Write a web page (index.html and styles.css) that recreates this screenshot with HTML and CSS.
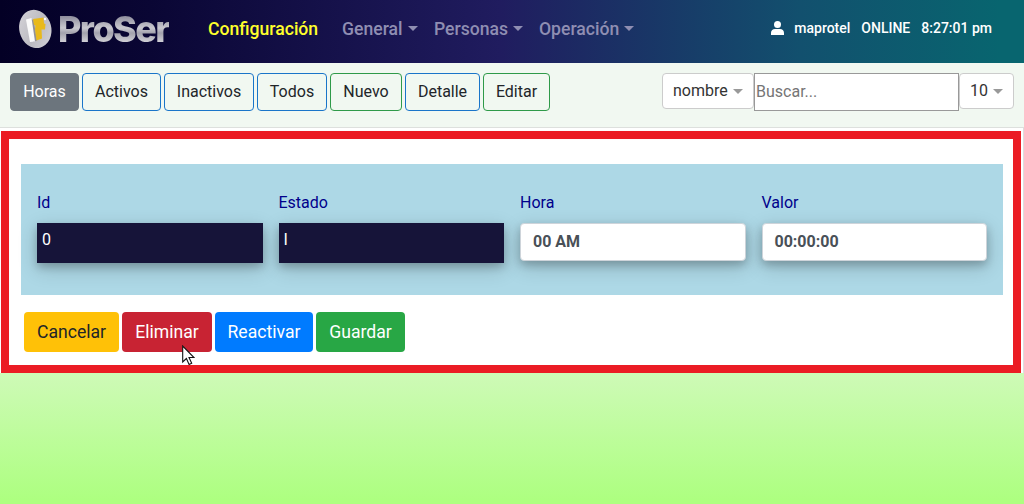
FILE: index.html
```
<!DOCTYPE html>
<html lang="es">
<head>
<meta charset="utf-8">
<title>ProSer - Horas</title>
<link rel="stylesheet" href="styles.css">
</head>
<body>
<header class="navbar">
  <a class="brand">
    <svg class="brand-mark" width="34" height="40" viewBox="0 0 34 40">
      <defs><linearGradient id="silver" x1="0" y1="0" x2="1" y2="1"><stop offset="0" stop-color="#d6d5da"/><stop offset=".55" stop-color="#bcbbc1"/><stop offset="1" stop-color="#d6d5da"/></linearGradient></defs>
      <ellipse cx="17.300" cy="20" rx="16" ry="19.300" transform="rotate(-14 17 20)" fill="url(#silver)"/>
      <path d="M13 10l2.500 1 3.500 20.500-4 1.500z" fill="#909098"/>
      <path d="M8 10.500l5.500-1.500 3.500 23.500-5 .5z" fill="#fafafa"/>
      <path d="M15 10l10.500-1.500.5 6 1.500.5-.5 5.500h-3.500l.5 9-5.500 2-1.500-11 .5-4-1.500-.5z" fill="#e8b91b"/>
      <circle cx="27" cy="10" r="1.200" fill="#fff"/>
    </svg>
    <span class="brand-name">ProSer</span>
  </a>
  <nav class="menu">
    <a class="menu-link active">Configuración</a>
    <a class="menu-link general">General<i class="caret"></i></a>
    <a class="menu-link personas">Personas<i class="caret"></i></a>
    <a class="menu-link">Operación<i class="caret"></i></a>
  </nav>
  <div class="session">
    <svg class="user" width="13" height="14" viewBox="0 0 13 14" fill="#fff"><circle cx="6.500" cy="3.500" r="3.500"/><path d="M0 14v-2.200C0 9.500 1.800 8 4 8h5c2.200 0 4 1.500 4 3.800V14z"/></svg>
    <span class="user-name">maprotel</span><span class="status">ONLINE</span><span>8:27:01 pm</span>
  </div>
</header>
<div class="toolbar">
  <div class="filters">
    <button class="btn current horas">Horas</button>
    <button class="btn activos">Activos</button>
    <button class="btn inactivos">Inactivos</button>
    <button class="btn todos">Todos</button>
    <button class="btn green nuevo">Nuevo</button>
    <button class="btn detalle">Detalle</button>
    <button class="btn green editar">Editar</button>
  </div>
  <div class="search">
    <div class="select field">nombre<i class="caret"></i></div>
    <input class="query" placeholder="Buscar...">
    <div class="select count">10<i class="caret"></i></div>
  </div>
</div>
<main class="card">
  <section class="frame">
    <div class="panel">
      <div class="group"><label class="label">Id</label><div class="readonly">0</div></div>
      <div class="group"><label class="label">Estado</label><div class="readonly">I</div></div>
      <div class="group"><label class="label">Hora</label><div class="control">00 AM</div></div>
      <div class="group"><label class="label">Valor</label><div class="control">00:00:00</div></div>
    </div>
    <div class="actions">
      <button class="action cancel">Cancelar</button>
      <button class="action remove">Eliminar</button>
      <button class="action restore">Reactivar</button>
      <button class="action save">Guardar</button>
    </div>
  </section>
</main>
<svg class="cursor" width="13" height="21" viewBox="0 0 13 21"><path d="M.7 1v16l3.700-3.500 2.700 6 2.600-1.200-2.700-5.800h5z" fill="#fff" stroke="#111" stroke-width="1.100"/></svg>
</body>
</html>
```

FILE: styles.css
```
* { box-sizing: border-box; }
body {
  margin: 0;
  height: 504px;
  overflow: hidden;
  font: 16px/24px Roboto, sans-serif;
  color: #212529;
  background: linear-gradient(#fff 0, #f1f8f1 70px, #cefab7 373px, #adff80 500px);
}
.navbar {
  height: 63px;
  display: flex;
  align-items: center;
  padding: 0 32px 6px 18px;
  background: linear-gradient(90deg, #030025 0, #0a0634 150px, #201c5f 500px, #12506e 800px, #08656f 1000px);
}
.brand { display: flex; align-items: center; width: 190px; }
.brand-mark { flex: none; }
.brand-name {
  margin-left: 6px;
  padding-top: 1px;
  font: 800 36px/44px Inter, sans-serif;
  letter-spacing: -1.6px;
  color: transparent;
  background: linear-gradient(#858494 8px, #c9c8cf 22px, #a3a2ad 27px, #d0cfd5 36px);
  background-clip: text;
  -webkit-background-clip: text;
}
.menu { display: flex; font-size: 17.6px; font-weight: 500; color: #8f8eb2; }
.menu-link { white-space: nowrap; width: 106px; }
.menu-link.active { width: 134px; color: #ffff2b; }
.menu-link.general { width: 92px; }
.menu-link.personas { width: 105px; }
.caret {
  display: inline-block;
  margin-left: 5px;
  vertical-align: 4px;
  border: 5px solid transparent;
  border-top-color: currentColor;
  border-bottom: 0;
}
.session { display: flex; align-items: center; margin-left: auto; padding-bottom: 1px; font-size: 14px; font-weight: 500; color: #fff; white-space: nowrap; }
.user { margin-right: 10px; }
.user-name, .status { margin-right: 11px; }
.toolbar {
  height: 65px;
  display: flex;
  justify-content: space-between;
  align-items: flex-start;
  padding: 10px 10px 0;
  background: #f1f8f1;
  border-bottom: 1px solid #dde0dd;
}
.filters { display: flex; gap: 3px; }
.btn {
  height: 38px;
  padding: 0;
  border: 1px solid #1a75c9;
  border-radius: 4px;
  background: transparent;
  font: 16px/24px Roboto, sans-serif;
  color: #212529;
}
.btn.current { background: #6c757d; border-color: #6c757d; color: #fff; }
.btn.green { border-color: #2f9a49; }
.horas { width: 69px; }
.activos { width: 79px; }
.inactivos { width: 90px; }
.todos { width: 70px; }
.nuevo { width: 72px; }
.detalle { width: 75px; }
.editar { width: 67px; }
.search { display: flex; align-items: flex-start; }
.select {
  height: 36px;
  padding: 5px 10px;
  border: 1px solid #ccc;
  border-radius: 4px;
  background: #fff;
  color: #333;
  white-space: nowrap;
}
.select .caret { color: #999; vertical-align: 2px; }
.field { width: 92px; }
.count { width: 55px; }
.query {
  width: 205px;
  height: 38px;
  padding: 0 1px 2px;
  border: 1px solid #999;
  background: #fff;
  font: 16px/24px Roboto, sans-serif;
}
.query::placeholder { color: #757575; }
.card { height: 245px; padding: 3px 2px 0 1px; background: #fff; border-right: 1px solid #ddd; }
.frame { height: 242px; border: 8px solid #eb1c24; padding: 25px 10px 0 12px; width: 1020px; }
.panel {
  height: 131px;
  display: grid;
  grid-template-columns: repeat(4, 1fr);
  column-gap: 16px;
  padding: 27px 16px 0;
  background: #add8e6;
}
.label { display: block; height: 32px; color: #00008b; }
.readonly {
  height: 40px;
  padding: 5px;
  background: #161439;
  color: #fff;
  box-shadow: 0 4px 8px rgba(0, 0, 0, .2), 0 6px 20px rgba(0, 0, 0, .19);
}
.control {
  height: 38px;
  padding: 6px 12px;
  border: 1px solid #ced4da;
  border-radius: 4px;
  background: #fff;
  color: #495057;
  font-weight: 700;
  box-shadow: 0 4px 8px rgba(0, 0, 0, .2), 0 6px 20px rgba(0, 0, 0, .19);
}
.actions { display: flex; gap: 3px; padding: 17px 3px 0; }
.action { height: 40px; padding: 0; border: 0; border-radius: 4px; font: 17.6px/24px Roboto, sans-serif; color: #fff; }
.cancel { width: 95px; background: #ffc107; color: #212529; }
.remove { width: 90px; background: #c82333; }
.restore { width: 98px; background: #007bff; }
.save { width: 89px; background: #28a745; }
.cursor { position: absolute; left: 182px; top: 345px; }
```
